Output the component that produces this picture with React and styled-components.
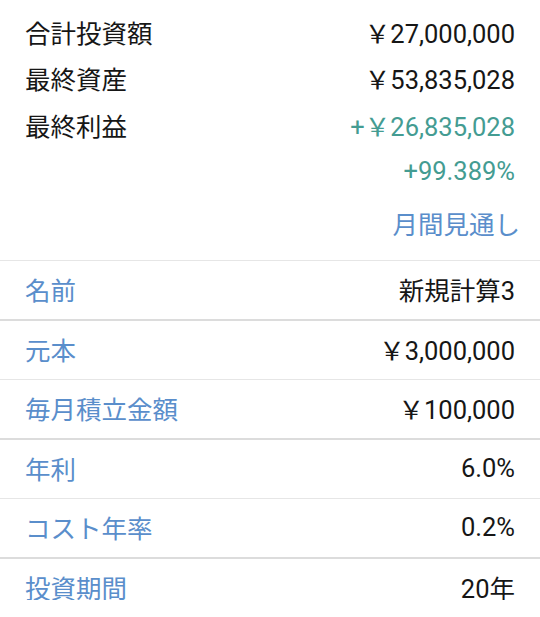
import React from "react"
import styled, { createGlobalStyle } from "styled-components"

const GlobalStyle = createGlobalStyle`
  html, body {
    margin: 0;
    padding: 0;
    background: #ffffff;
  }
  body {
    font-family: Roboto, "Noto Sans CJK JP", sans-serif;
    color: #161616;
    -webkit-font-smoothing: antialiased;
  }
`

// Summary totals at the top
const summary = [
  { label: "合計投資額", value: "￥27,000,000" },
  { label: "最終資産", value: "￥53,835,028" },
  { label: "最終利益", value: "+￥26,835,028", gain: true },
  { label: "", value: "+99.389%", gain: true },
]

// Input settings, thick = heavier divider above the row
const settings = [
  { label: "名前", value: "新規計算3", thick: false },
  { label: "元本", value: "￥3,000,000", thick: true },
  { label: "毎月積立金額", value: "￥100,000", thick: false },
  { label: "年利", value: "6.0%", thick: true },
  { label: "コスト年率", value: "0.2%", thick: false },
  { label: "投資期間", value: "20年", thick: true },
]

const Screen = styled.div`
  width: 540px;
  height: 600px;
  overflow: hidden;
  display: flex;
  flex-direction: column;
  box-shadow: 0 1px 2px rgba(0, 0, 0, 0.06);
`

const Summary = styled.section`
  padding: 8px 25px 12px;
  display: flex;
  flex-direction: column;
`

const SummaryRow = styled.div`
  display: flex;
  justify-content: space-between;
  align-items: center;
  height: 46.5px;
  font-size: 25.5px;
  color: ${(p) => (p.$gain ? "#449c92" : "#161616")};
`

const SummaryLabel = styled.span`
  color: #161616;
`

const OutlookLink = styled.a`
  align-self: flex-end;
  margin: 8px -5px 0 0;
  height: 46px;
  line-height: 46px;
  font-size: 25.5px;
  color: #5a8ecb;
  text-decoration: none;
`

const List = styled.ul`
  margin: 0;
  padding: 0;
  list-style: none;
`

const Row = styled.li`
  display: flex;
  justify-content: space-between;
  align-items: center;
  height: 55px;
  padding: 0 25px 3px;
  border-top: ${(p) => (p.$thick ? "2px solid #dcdcdc" : "1px solid #e6e6e6")};
  font-size: 25.5px;
`

const Label = styled.span`
  color: #5a8ecb;
`

const Value = styled.span`
  color: #161616;
`

function App() {
  return (
    <>
      <GlobalStyle />
      <Screen>
        <Summary>
          {summary.map(({ label, value, gain }) => (
            <SummaryRow key={value} $gain={gain}>
              <SummaryLabel>{label}</SummaryLabel>
              <span>{value}</span>
            </SummaryRow>
          ))}
          <OutlookLink href="#">月間見通し</OutlookLink>
        </Summary>
        <List>
          {settings.map(({ label, value, thick }) => (
            <Row key={label} $thick={thick}>
              <Label>{label}</Label>
              <Value>{value}</Value>
            </Row>
          ))}
        </List>
      </Screen>
    </>
  )
}

export default App
